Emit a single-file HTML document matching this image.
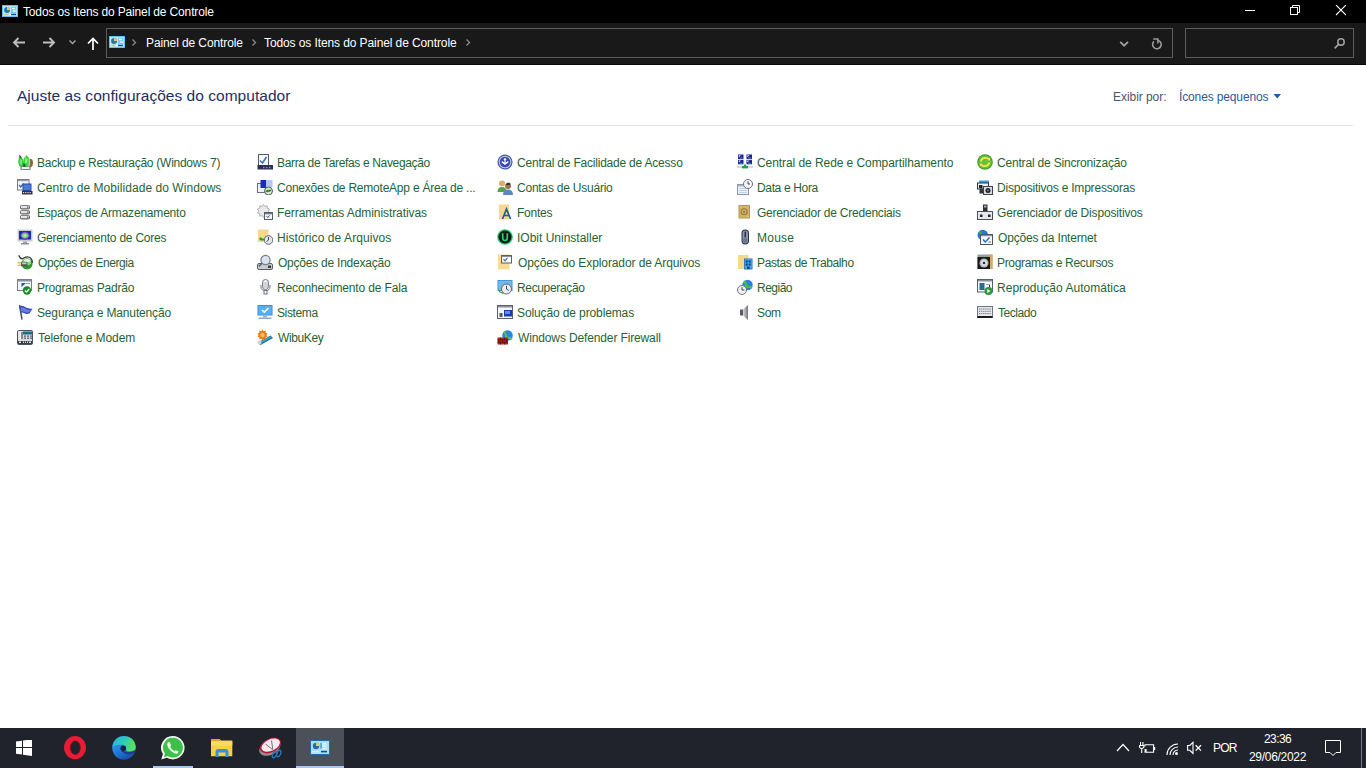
<!DOCTYPE html>
<html><head><meta charset="utf-8"><style>
*{margin:0;padding:0;box-sizing:border-box}
html,body{width:1366px;height:768px;overflow:hidden;background:#fff;font-family:"Liberation Sans",sans-serif}
.a{position:absolute}
.ic{position:absolute;display:block}
.it{position:absolute;font-size:12px;line-height:16px;height:16px;color:#1f6434;white-space:nowrap;top:0}
#title{position:absolute;left:0;top:0;width:1366px;height:23px;background:#000}
#tb{position:absolute;left:0;top:23px;width:1366px;height:41px;background:#191919}
#tbl{position:absolute;left:0;top:64px;width:1366px;height:1px;background:#050505}
#addr{position:absolute;left:106px;top:28px;width:1067px;height:30px;border:1px solid #5c5c5c;background:#191919}
#search{position:absolute;left:1185px;top:28px;width:169px;height:30px;border:1px solid #5c5c5c;background:#191919}
#task{position:absolute;left:0;top:728px;width:1366px;height:40px;background:#20232c}
.wt{position:absolute;color:#fff;font-size:12px;line-height:16px;white-space:nowrap}
</style></head><body>
<div id="title"></div>
<svg class="ic" style="left:2px;top:5px" width="16" height="12" viewBox="0 0 16 12"><rect x="0" y="0" width="16" height="12" fill="#58b4ec"/><rect x="0.8" y="0.8" width="14.4" height="10.4" fill="#b4eafc"/><circle cx="5" cy="5" r="2.9" fill="#2a70c0"/><path d="M5 5 L5 2.1 A2.9 2.9 0 0 1 7.9 5Z" fill="#e8c860"/><path d="M5 5 L7.9 5 A2.9 2.9 0 0 1 6.5 7.5Z" fill="#3a8a40"/><rect x="9" y="1.8" width="5.2" height="6.5" fill="#78c8f4"/><rect x="9.8" y="2.8" width="3" height="1.3" fill="#f4fcff"/><rect x="10.8" y="5.3" width="3" height="1.3" fill="#f4fcff"/><rect x="2.5" y="8.8" width="4" height="1.4" fill="#d8c070"/><rect x="7.2" y="8.8" width="1.4" height="1.4" fill="#ffffff"/><rect x="9" y="8.8" width="5" height="1.4" fill="#1a4a9a"/></svg>
<div class="wt" id="ttl" style="left:23px;top:4px;letter-spacing:-0.15px">Todos os Itens do Painel de Controle</div>
<svg class="a" style="left:1245px;top:5px" width="101" height="11" viewBox="1245 5 101 11">
 <rect x="1245" y="10" width="10" height="1" fill="#fff"/>
 <rect x="1290.5" y="7.5" width="7" height="7" fill="none" stroke="#fff"/>
 <path d="M1292.5 7.5 L1292.5 5.5 L1299.5 5.5 L1299.5 12.5 L1297.5 12.5" fill="none" stroke="#fff"/>
 <path d="M1336 5 L1346 15 M1346 5 L1336 15" stroke="#fff" stroke-width="1.1"/>
</svg>
<div id="tb"></div><div id="tbl"></div>
<svg class="a" style="left:0;top:23px" width="106" height="41" viewBox="0 23 106 41">
 <path d="M25 42.5 L14 42.5 M18.5 38 L14 42.5 L18.5 47" stroke="#bdbdbd" stroke-width="1.9" fill="none"/>
 <path d="M43 42.5 L54 42.5 M49.5 38 L54 42.5 L49.5 47" stroke="#bdbdbd" stroke-width="1.9" fill="none"/>
 <path d="M69.5 40.5 L72.5 43.5 L75.5 40.5" stroke="#a0a0a0" stroke-width="1.5" fill="none"/>
 <path d="M93 50 L93 39 M88 43.5 L93 38.5 L98 43.5" stroke="#fff" stroke-width="1.7" fill="none"/>
</svg>
<div id="addr"></div>
<svg class="ic" style="left:109px;top:36px" width="16" height="12" viewBox="0 0 16 12"><rect x="0" y="0" width="16" height="12" fill="#58b4ec"/><rect x="0.8" y="0.8" width="14.4" height="10.4" fill="#b4eafc"/><circle cx="5" cy="5" r="2.9" fill="#2a70c0"/><path d="M5 5 L5 2.1 A2.9 2.9 0 0 1 7.9 5Z" fill="#e8c860"/><path d="M5 5 L7.9 5 A2.9 2.9 0 0 1 6.5 7.5Z" fill="#3a8a40"/><rect x="9" y="1.8" width="5.2" height="6.5" fill="#78c8f4"/><rect x="9.8" y="2.8" width="3" height="1.3" fill="#f4fcff"/><rect x="10.8" y="5.3" width="3" height="1.3" fill="#f4fcff"/><rect x="2.5" y="8.8" width="4" height="1.4" fill="#d8c070"/><rect x="7.2" y="8.8" width="1.4" height="1.4" fill="#ffffff"/><rect x="9" y="8.8" width="5" height="1.4" fill="#1a4a9a"/></svg>
<svg class="a" style="left:106px;top:28px" width="1067" height="30" viewBox="106 28 1067 30">
 <path d="M132.5 39.5 L135.5 42.5 L132.5 45.5" stroke="#8a8a8a" stroke-width="1.3" fill="none"/>
 <path d="M252.5 39.5 L255.5 42.5 L252.5 45.5" stroke="#8a8a8a" stroke-width="1.3" fill="none"/>
 <path d="M466.5 39.5 L469.5 42.5 L466.5 45.5" stroke="#8a8a8a" stroke-width="1.3" fill="none"/>
 <path d="M1120.2 41.8 L1124.1 45.7 L1128 41.8" stroke="#a0a0a0" stroke-width="1.8" fill="none"/>
 <path d="M1157.3 40.2 A4.3 4.3 0 1 1 1153.9 41.4" stroke="#9a9a9a" stroke-width="1.6" fill="none"/>
 <path d="M1153.2 38.9 L1157.9 38.9 L1157.9 43.4" stroke="#9a9a9a" stroke-width="1.5" fill="none"/>
</svg>
<div class="wt" style="left:146px;top:35px;letter-spacing:-0.1px">Painel de Controle</div>
<div class="wt" style="left:264px;top:35px;letter-spacing:-0.1px">Todos os Itens do Painel de Controle</div>
<div id="search"></div>
<svg class="a" style="left:1330px;top:34px" width="16" height="16" viewBox="0 0 16 16">
 <circle cx="11" cy="8" r="3.2" stroke="#a0a0a0" stroke-width="1.5" fill="none"/>
 <path d="M8.8 10.2 L4.6 14.4" stroke="#a0a0a0" stroke-width="1.7"/>
</svg>
<div class="a" style="left:17px;top:86px;font-size:15.5px;line-height:20px;color:#1c2f66;white-space:nowrap;letter-spacing:0.03px">Ajuste as configurações do computador</div>
<div class="a" style="left:1113px;top:89px;font-size:12px;line-height:16px;color:#4c5666;white-space:nowrap;letter-spacing:-0.05px">Exibir por:</div>
<div class="a" style="left:1179px;top:89px;font-size:12px;line-height:16px;color:#2a5a9e;white-space:nowrap;letter-spacing:-0.136px">Ícones pequenos</div>
<svg class="a" style="left:1273px;top:94px" width="9" height="5" viewBox="0 0 9 5"><path d="M0.5 0 L8 0 L4.25 4.5Z" fill="#1e5aa8"/></svg>
<div class="a" style="left:8px;top:125px;width:1345px;height:1px;background:#dfe2e8"></div>
<svg class="ic" style="left:17px;top:154px" width="16" height="16" viewBox="0 0 16 16"><ellipse cx="13" cy="9" rx="3" ry="4.2" fill="#8a6a4a"/><rect x="10.5" y="5" width="2.5" height="8" fill="#c8c0e0"/><rect x="3.5" y="12" width="10" height="3.8" fill="#5a6a62"/><rect x="4.5" y="12.6" width="8" height="2.4" fill="#eef0ec"/><path d="M2.2 0.8 L5 3.5 L6.5 7 L6 12.5 L2.5 12.5 L1.2 8 L1.8 4Z" fill="#38c038"/><path d="M3 5 L5 6 L5 11 L2.8 10Z" fill="#70f070"/><path d="M2.2 0.8 L4.5 2.8 L3.5 4.5Z" fill="#305a40"/><path d="M9.5 1 L12 4 L11.5 12 L6.5 12.8 L6.5 5Z" fill="#40d040"/><path d="M8.5 3.5 L10.5 5 L10.2 9 L8 9Z" fill="#80ff80"/><path d="M6.5 8 L9 12.8 L6 12.8Z" fill="#1a5a2a"/></svg><div class="it" style="left:37.0px;top:155px;letter-spacing:-0.258px">Backup e Restauração (Windows 7)</div><svg class="ic" style="left:17px;top:179px" width="16" height="16" viewBox="0 0 16 16"><rect x="0.5" y="0.5" width="11.5" height="10.5" fill="#f4f8fc" stroke="#7a7a8a"/><rect x="1" y="1" width="10.5" height="1.2" fill="#9aa0b0"/><path d="M2 6 L3.8 8 L6.5 4.5" stroke="#2a6ab0" stroke-width="1.3" fill="none"/><rect x="5.5" y="4.5" width="9" height="7.5" fill="#2a4aa8"/><rect x="6.5" y="5.5" width="7" height="5.5" fill="#4a7ad8"/><rect x="5" y="12" width="10.5" height="3.5" fill="#303040"/><rect x="6" y="13" width="1.2" height="1.2" fill="#ddd"/><rect x="8.2" y="13" width="1.2" height="1.2" fill="#ddd"/><rect x="10.4" y="13" width="1.2" height="1.2" fill="#ddd"/><rect x="12.6" y="13" width="1.2" height="1.2" fill="#ddd"/></svg><div class="it" style="left:37.0px;top:180px;letter-spacing:0.053px">Centro de Mobilidade do Windows</div><svg class="ic" style="left:17px;top:204px" width="16" height="16" viewBox="0 0 16 16"><rect x="3" y="1" width="10" height="4.5" rx="1.8" fill="#6a6a6a"/><rect x="4" y="1.8" width="8" height="2.4" fill="#e6e6e6"/><rect x="10" y="2.6" width="1.6" height="1" fill="#404040"/><rect x="3" y="6" width="10" height="4.5" rx="1.8" fill="#6a6a6a"/><rect x="4" y="6.8" width="8" height="2.4" fill="#e6e6e6"/><rect x="10" y="7.6" width="1.6" height="1" fill="#404040"/><rect x="3" y="11" width="10" height="4.5" rx="1.8" fill="#6a6a6a"/><rect x="4" y="11.8" width="8" height="2.4" fill="#e6e6e6"/><rect x="10" y="12.6" width="1.6" height="1" fill="#404040"/></svg><div class="it" style="left:37.0px;top:205px;letter-spacing:-0.196px">Espaços de Armazenamento</div><svg class="ic" style="left:17px;top:229px" width="16" height="16" viewBox="0 0 16 16"><defs><radialGradient id="cg"><stop offset="0" stop-color="#e8f060"/><stop offset="0.5" stop-color="#60d8a0"/><stop offset="0.8" stop-color="#8a40c0"/><stop offset="1" stop-color="#1a2ab0"/></radialGradient></defs><rect x="0.5" y="0.5" width="15" height="12" fill="#c8ccd4"/><rect x="2" y="2" width="12" height="8.5" fill="#1a2aa8"/><ellipse cx="8" cy="6.5" rx="5" ry="4" fill="url(#cg)"/><rect x="6" y="12.5" width="4" height="1.5" fill="#a0a4aa"/><rect x="4" y="14" width="8" height="1.5" fill="#8a8e96"/></svg><div class="it" style="left:37.0px;top:230px;letter-spacing:-0.214px">Gerenciamento de Cores</div><svg class="ic" style="left:17px;top:254px" width="16" height="16" viewBox="0 0 16 16"><circle cx="10" cy="9.8" r="5.6" fill="#2a9a2a"/><ellipse cx="10" cy="8" rx="4.2" ry="3.2" fill="#8ae080"/><ellipse cx="10" cy="6.5" rx="3" ry="1.6" fill="#e8f8e8"/><path d="M1.8 1.2 Q3 5 5.5 4.8 Q9 2 12.5 3.2 Q15.8 5 15.2 9" stroke="#3a3a3a" stroke-width="1.2" fill="none"/><rect x="4" y="7.8" width="6.5" height="4.6" rx="1" fill="#5a5a5a"/><rect x="5" y="8.4" width="4.5" height="1.8" fill="#c8c8c8"/><rect x="0.5" y="8.2" width="3.5" height="1.2" fill="#d0b040"/><rect x="0.5" y="10.6" width="3.5" height="1.2" fill="#d0b040"/></svg><div class="it" style="left:38.0px;top:255px;letter-spacing:-0.406px">Opções de Energia</div><svg class="ic" style="left:17px;top:279px" width="16" height="16" viewBox="0 0 16 16"><rect x="0.5" y="0.5" width="14" height="11" fill="#f2f6fa" stroke="#7a7a88"/><rect x="1" y="1" width="13" height="1.5" fill="#8a90a0"/><path d="M4.5 4 L9 4 L4.5 8Z" fill="#2a50b0"/><rect x="9" y="4" width="4" height="1" fill="#8aa0c0"/><circle cx="10" cy="11.5" r="4.2" fill="#1a8a2a"/><path d="M7.8 11.5 L9.5 13 L12.3 10" stroke="#e8ffe8" stroke-width="1.3" fill="none"/></svg><div class="it" style="left:37.0px;top:280px;letter-spacing:-0.227px">Programas Padrão</div><svg class="ic" style="left:17px;top:304px" width="16" height="16" viewBox="0 0 16 16"><path d="M2.5 1 L5 15.5" stroke="#4a5068" stroke-width="1.5"/><path d="M2.5 2 Q6 1 9 3.5 Q12 5 15.5 4.5 L12.5 9.5 Q9 10.5 7 9 Q5 8 3.5 9Z" fill="#3a50b8"/><path d="M4 3.5 Q7 3 9 5 Q11 6.5 13.5 6 L12 8.3 Q9 9 7.5 7.8 Q5.5 7 4 7.5Z" fill="#6a80e0"/></svg><div class="it" style="left:37.0px;top:305px;letter-spacing:-0.157px">Segurança e Manutenção</div><svg class="ic" style="left:17px;top:329px" width="16" height="16" viewBox="0 0 16 16"><rect x="0.5" y="1.5" width="15" height="14" rx="1.2" fill="#d8dce4" stroke="#4a5060"/><rect x="1.5" y="2.5" width="3" height="8" fill="#f0f0e8"/><rect x="4.5" y="3" width="1" height="7" fill="#303030"/><rect x="6" y="2.5" width="9" height="3" fill="#1a6a8a"/><rect x="7" y="6.5" width="2" height="1.2" fill="#505860"/><rect x="10" y="6.5" width="2" height="1.2" fill="#505860"/><rect x="13" y="6.5" width="2" height="1.2" fill="#805060"/><rect x="7" y="8.6" width="2" height="1.2" fill="#505860"/><rect x="10" y="8.6" width="2" height="1.2" fill="#505860"/><rect x="13" y="8.6" width="2" height="1.2" fill="#505860"/><rect x="1" y="12" width="14" height="3" fill="#3a3e48"/><rect x="2" y="12.5" width="2" height="1.5" fill="#e0e0e0"/><rect x="6" y="12.5" width="1" height="1.5" fill="#e0e0e0"/><rect x="8" y="12.5" width="1" height="1.5" fill="#e0e0e0"/><rect x="10" y="12.5" width="1" height="1.5" fill="#e0e0e0"/><rect x="12" y="12.5" width="2" height="1.5" fill="#e0e0e0"/></svg><div class="it" style="left:38.0px;top:330px;letter-spacing:-0.100px">Telefone e Modem</div><svg class="ic" style="left:257px;top:154px" width="16" height="16" viewBox="0 0 16 16"><rect x="1.5" y="0.5" width="10" height="12" fill="#f6f8fc" stroke="#5a5a66"/><path d="M3 6.5 L5.5 9 L9.5 3" stroke="#3a78b8" stroke-width="1.6" fill="none"/><rect x="0.5" y="11" width="15.5" height="4.5" fill="#2a2e50"/><rect x="6" y="12.8" width="1.5" height="1.5" fill="#8a90c0"/><rect x="9" y="12.8" width="1.5" height="1.5" fill="#8a90c0"/><rect x="12" y="12.8" width="1.5" height="1.5" fill="#8a90c0"/></svg><div class="it" style="left:277.0px;top:155px;letter-spacing:-0.344px">Barra de Tarefas e Navegação</div><svg class="ic" style="left:257px;top:179px" width="16" height="16" viewBox="0 0 16 16"><rect x="0.5" y="4.5" width="9" height="9" fill="#eef2f8" stroke="#6a7080"/><rect x="8" y="1" width="7.5" height="7" fill="#b8c8e8"/><rect x="3.5" y="1" width="5.5" height="8" fill="#1a2ab8"/><circle cx="11.5" cy="12" r="4" fill="#d8ecc8" stroke="#505a68"/><path d="M8.8 12.5 L10.8 11 M14.2 11 L12 12.5 M10 13 L13 11" stroke="#2a7a2a" stroke-width="1.1" fill="none"/></svg><div class="it" style="left:277.0px;top:180px;letter-spacing:-0.221px">Conexões de RemoteApp e Área de ...</div><svg class="ic" style="left:257px;top:204px" width="16" height="16" viewBox="0 0 16 16"><path d="M6.5 0.5 L7.8 2.5 L10.2 1.7 L10.3 4.2 L12.6 5 L11.2 7 L12.6 9 L10.3 9.8 L10.2 12.3 L7.8 11.5 L6.5 13.5 L5.2 11.5 L2.8 12.3 L2.7 9.8 L0.4 9 L1.8 7 L0.4 5 L2.7 4.2 L2.8 1.7 L5.2 2.5Z" fill="#e8eaee" stroke="#a0a4ac" stroke-width="0.8"/><rect x="7.5" y="8.5" width="8" height="7" fill="#f2f4f6" stroke="#5a6068"/><rect x="8" y="9" width="7" height="1.3" fill="#707880"/><path d="M9.5 12 L10.8 13.5 L12.5 11.3" stroke="#4a5a80" fill="none"/></svg><div class="it" style="left:277.0px;top:205px;letter-spacing:-0.077px">Ferramentas Administrativas</div><svg class="ic" style="left:257px;top:229px" width="16" height="16" viewBox="0 0 16 16"><rect x="1" y="0.5" width="10.5" height="12.5" fill="#f8d890"/><path d="M2 10 Q5 14 10 9 L11 11 L11 7 L7.5 7.5 L9 8.5 Q6 11 3.5 8Z" fill="#2aa02a"/><circle cx="11.5" cy="11" r="4.3" fill="#e4e6ec" stroke="#606670"/><path d="M11.5 8 L11.5 11 L9.5 12.5" stroke="#404048" fill="none"/></svg><div class="it" style="left:277.0px;top:230px;letter-spacing:0.080px">Histórico de Arquivos</div><svg class="ic" style="left:257px;top:254px" width="16" height="16" viewBox="0 0 16 16"><rect x="0.5" y="9.5" width="15" height="6" rx="1.5" fill="#c8ccd0" stroke="#5a5e66"/><rect x="11" y="11.5" width="3" height="2.5" fill="#3a3a3a"/><circle cx="8.5" cy="6" r="4.6" fill="#d8e2f0" stroke="#7a8088" stroke-width="1.2"/><path d="M5 9 L2 12.5" stroke="#5a5e66" stroke-width="1.5"/></svg><div class="it" style="left:278.0px;top:255px;letter-spacing:-0.233px">Opções de Indexação</div><svg class="ic" style="left:257px;top:279px" width="16" height="16" viewBox="0 0 16 16"><rect x="5.5" y="0.5" width="6" height="10" rx="3" fill="#f4f4f6" stroke="#707480"/><path d="M5.5 4 L11.5 4 M5.5 6 L11.5 6 M5.5 8 L11.5 8" stroke="#a0a4ac" stroke-width="0.8"/><path d="M4 6 L4 8 Q4 11.5 8.5 11.5 Q13 11.5 13 8 L13 6" stroke="#707480" fill="none"/><rect x="7" y="11.5" width="3" height="3.5" fill="#f4f4f6" stroke="#707480"/></svg><div class="it" style="left:277.0px;top:280px;letter-spacing:-0.143px">Reconhecimento de Fala</div><svg class="ic" style="left:257px;top:304px" width="16" height="16" viewBox="0 0 16 16"><rect x="0.5" y="1" width="15" height="10.5" fill="#2a8ad8"/><rect x="1.3" y="1.8" width="13.4" height="8.9" fill="#58b0f0"/><path d="M5 6 L7.3 8.2 L11.5 4" stroke="#ffffff" stroke-width="1.5" fill="none"/><rect x="6" y="12.3" width="4" height="1" fill="#7090b0"/><rect x="1.5" y="13.5" width="13" height="1.5" fill="#90a8c0"/></svg><div class="it" style="left:277.0px;top:305px;letter-spacing:-0.383px">Sistema</div><svg class="ic" style="left:257px;top:329px" width="16" height="16" viewBox="0 0 16 16"><path d="M1 13.5 L13.5 6.5 L16 9 L3.5 16Z" fill="#1a6a8a"/><path d="M2 13.5 L13.5 7.3 L14.5 8.5 L3 14.7Z" fill="#40b0c8"/><path d="M0.5 12.5 L4 11 L4.5 15 L1.5 15.5Z" fill="#c8d0d8"/><path d="M5.5 0.5 L6.6 2.2 L8.6 1.6 L8.6 3.7 L10.5 4.5 L9.3 6 L10.5 7.5 L8.6 8.3 L8.6 10.4 L6.6 9.8 L5.5 11.5 L4.4 9.8 L2.4 10.4 L2.4 8.3 L0.5 7.5 L1.7 6 L0.5 4.5 L2.4 3.7 L2.4 1.6 L4.4 2.2Z" fill="#e87a18"/><circle cx="5.5" cy="6" r="2.2" fill="#f8c050"/></svg><div class="it" style="left:278.0px;top:330px;letter-spacing:-0.383px">WibuKey</div><svg class="ic" style="left:497px;top:154px" width="16" height="16" viewBox="0 0 16 16"><circle cx="8" cy="8" r="7.6" fill="#4858b0"/><circle cx="8" cy="8" r="6.3" fill="#c8d0ec"/><circle cx="8" cy="8" r="5.3" fill="#3848b0"/><path d="M4.8 7.5 Q8 11.5 11.2 7.5" stroke="#fff" stroke-width="1.3" fill="none"/><circle cx="8" cy="5.5" r="1.3" fill="#fff"/><path d="M8 7 L8 11" stroke="#fff" stroke-width="1.2"/></svg><div class="it" style="left:517.0px;top:155px;letter-spacing:-0.210px">Central de Facilidade de Acesso</div><svg class="ic" style="left:497px;top:179px" width="16" height="16" viewBox="0 0 16 16"><circle cx="5" cy="4.5" r="3" fill="#d8b070"/><path d="M0.5 13 Q0.5 8 5 8 Q9.5 8 9.5 13Z" fill="#58a050"/><circle cx="11" cy="7" r="3" fill="#a07050"/><path d="M10 4 Q11 3 13.5 4.5 L13 6 L9 6Z" fill="#3a3030"/><path d="M6 16 Q6 10.5 11 10.5 Q16 10.5 16 16Z" fill="#5a88c0"/></svg><div class="it" style="left:517.0px;top:180px;letter-spacing:-0.225px">Contas de Usuário</div><svg class="ic" style="left:497px;top:204px" width="16" height="16" viewBox="0 0 16 16"><rect x="2" y="0.5" width="10" height="15" fill="#f8d888"/><path d="M5.5 15 L9.5 5 L13.5 15 M7.3 11.5 L11.7 11.5" stroke="#1a5aa0" stroke-width="1.7" fill="none"/></svg><div class="it" style="left:517.0px;top:205px;letter-spacing:-0.260px">Fontes</div><svg class="ic" style="left:497px;top:229px" width="16" height="16" viewBox="0 0 16 16"><circle cx="8" cy="8" r="7.8" fill="#2ac870"/><circle cx="8" cy="8" r="6.5" fill="#0a1a14"/><path d="M5.7 4.2 L5.7 8.8 Q5.7 11.5 8 11.5 Q10.3 11.5 10.3 8.8 L10.3 4.2" stroke="#30d070" stroke-width="1.7" fill="none"/></svg><div class="it" style="left:517.0px;top:230px;letter-spacing:0.000px">IObit Uninstaller</div><svg class="ic" style="left:497px;top:254px" width="16" height="16" viewBox="0 0 16 16"><rect x="1" y="0.5" width="11.5" height="15" fill="#f8dc90"/><rect x="4.5" y="1.5" width="10" height="7.5" fill="#f6f8fa" stroke="#5a6068"/><rect x="5" y="2" width="9" height="1" fill="#8a909a"/><path d="M6.5 5 L8 6.8 L10.5 3.8" stroke="#3a6ab0" stroke-width="1.1" fill="none"/></svg><div class="it" style="left:518.0px;top:255px;letter-spacing:-0.100px">Opções do Explorador de Arquivos</div><svg class="ic" style="left:497px;top:279px" width="16" height="16" viewBox="0 0 16 16"><rect x="0.5" y="1" width="15" height="11" fill="#3a90d8"/><rect x="1.3" y="1.8" width="13.4" height="9.4" fill="#70b8e8"/><circle cx="9.5" cy="10" r="5" fill="#eaeef2" stroke="#606670"/><path d="M9.5 6.8 L9.5 10 L11.8 11.5" stroke="#404048" fill="none"/><path d="M1.5 9 Q3 14 7 13.5 L6 15 L2 13Z" fill="#2aa02a"/></svg><div class="it" style="left:517.0px;top:280px;letter-spacing:-0.350px">Recuperação</div><svg class="ic" style="left:497px;top:304px" width="16" height="16" viewBox="0 0 16 16"><rect x="0.5" y="1.5" width="15" height="13" fill="#f4f6f8" stroke="#5a6068"/><rect x="1" y="2" width="14" height="1.5" fill="#8a909a"/><rect x="7" y="6" width="8" height="6.5" fill="#1a3ab0"/><rect x="8" y="7" width="5" height="3" fill="#5a90e8"/><rect x="2.5" y="9" width="3" height="4" fill="#505860"/></svg><div class="it" style="left:517.0px;top:305px;letter-spacing:-0.118px">Solução de problemas</div><svg class="ic" style="left:497px;top:329px" width="16" height="16" viewBox="0 0 16 16"><circle cx="10.5" cy="6.5" r="5.3" fill="#2a88d8"/><path d="M7 3 Q10 5.5 8.5 9 Q12 8 15 10" stroke="#5ac050" stroke-width="2" fill="none"/><rect x="0.5" y="8.5" width="10.5" height="7" fill="#a82818"/><path d="M0.5 10.8 L11 10.8 M0.5 13.2 L11 13.2 M3.5 8.5 L3.5 10.8 M7.5 8.5 L7.5 10.8 M2 10.8 L2 13.2 M5.5 10.8 L5.5 13.2 M9.5 10.8 L9.5 13.2 M3.5 13.2 L3.5 15.5 M7.5 13.2 L7.5 15.5" stroke="#5a1008" stroke-width="0.8"/></svg><div class="it" style="left:518.0px;top:330px;letter-spacing:-0.133px">Windows Defender Firewall</div><svg class="ic" style="left:737px;top:154px" width="16" height="16" viewBox="0 0 16 16"><rect x="1" y="0.5" width="5.5" height="4.5" fill="#1a2a8a"/><rect x="9.5" y="0.5" width="5.5" height="4.5" fill="#1a2a8a"/><rect x="1" y="5.8" width="5.5" height="4.5" fill="#1a2a8a"/><rect x="9.5" y="5.8" width="5.5" height="4.5" fill="#1a2a8a"/><path d="M1.8 1.3 L4 1.3 L1.8 3.3Z M10.3 1.3 L12.5 1.3 L10.3 3.3Z M1.8 6.6 L4 6.6 L1.8 8.6Z M10.3 6.6 L12.5 6.6 L10.3 8.6Z" fill="#e8f0ff"/><rect x="2.5" y="3.5" width="3" height="1" fill="#5a80d0"/><rect x="11" y="3.5" width="3" height="1" fill="#5a80d0"/><rect x="2.5" y="8.8" width="3" height="1" fill="#5a80d0"/><rect x="11" y="8.8" width="3" height="1" fill="#5a80d0"/><path d="M0 13 L16 13" stroke="#a8b0c0"/><rect x="5" y="11.8" width="6" height="2.6" fill="#20a050"/><rect x="7" y="10.5" width="2" height="1.5" fill="#20a050"/></svg><div class="it" style="left:757.0px;top:155px;letter-spacing:-0.070px">Central de Rede e Compartilhamento</div><svg class="ic" style="left:737px;top:179px" width="16" height="16" viewBox="0 0 16 16"><rect x="0.5" y="5.5" width="11" height="10" fill="#eef2f8" stroke="#8a98aa"/><rect x="1" y="6" width="10" height="1.5" fill="#a8b8cc"/><path d="M2.5 9.5 L10 9.5 M2.5 11.5 L10 11.5 M2.5 13.5 L10 13.5" stroke="#8aa8d8" stroke-width="0.9" stroke-dasharray="1 1"/><circle cx="11" cy="5" r="4.5" fill="#f4f6f8" stroke="#6a7280"/><path d="M11 2.3 L11 5 L13 5" stroke="#404048" fill="none"/></svg><div class="it" style="left:757.0px;top:180px;letter-spacing:-0.350px">Data e Hora</div><svg class="ic" style="left:737px;top:204px" width="16" height="16" viewBox="0 0 16 16"><rect x="1.5" y="1" width="11.5" height="13.5" fill="#b89848"/><rect x="2.5" y="2" width="9.5" height="11.5" fill="#d0b468"/><circle cx="7.2" cy="7.8" r="3" fill="none" stroke="#98783a" stroke-width="1.1"/><circle cx="7.2" cy="7.8" r="1.1" fill="#a06a40"/><circle cx="3.5" cy="3" r="0.6" fill="#f0e0a0"/><circle cx="11" cy="12.5" r="0.6" fill="#f0e0a0"/></svg><div class="it" style="left:757.0px;top:205px;letter-spacing:-0.216px">Gerenciador de Credenciais</div><svg class="ic" style="left:737px;top:229px" width="16" height="16" viewBox="0 0 16 16"><rect x="4.5" y="0.5" width="7.5" height="15" rx="3.7" fill="#2a3040"/><rect x="5.5" y="1.5" width="5.5" height="13" rx="2.7" fill="#8a98b0"/><rect x="6" y="9" width="4.5" height="5" rx="2" fill="#6a7890"/><rect x="7.6" y="2.5" width="1.3" height="6" rx="0.6" fill="#1a2030"/></svg><div class="it" style="left:757.0px;top:230px;letter-spacing:0.250px">Mouse</div><svg class="ic" style="left:737px;top:254px" width="16" height="16" viewBox="0 0 16 16"><rect x="1" y="1" width="10.5" height="14" fill="#f8d888"/><rect x="7" y="4.5" width="8.5" height="11" fill="#1a70c0"/><rect x="7.7" y="5.2" width="7.1" height="9.6" fill="#48a8e8"/><rect x="8.7" y="6.5" width="2" height="2" fill="#0a3a80"/><rect x="11.7" y="6.5" width="2" height="2" fill="#0a3a80"/><rect x="8.7" y="9.5" width="2" height="2" fill="#0a3a80"/><rect x="11.7" y="9.5" width="2" height="2" fill="#0a3a80"/><rect x="10" y="12.5" width="2.5" height="2.5" fill="#0a3a80"/></svg><div class="it" style="left:757.0px;top:255px;letter-spacing:-0.371px">Pastas de Trabalho</div><svg class="ic" style="left:737px;top:279px" width="16" height="16" viewBox="0 0 16 16"><circle cx="10.5" cy="6" r="5.2" fill="#2a80d8"/><path d="M7 2.5 Q10 4.5 9 8 Q12 7 15 9" stroke="#48c048" stroke-width="2.2" fill="none"/><circle cx="5" cy="11" r="4.5" fill="#eef0f2" stroke="#707680"/><path d="M5 8.2 L5 11 L7.3 11" stroke="#404048" fill="none"/></svg><div class="it" style="left:757.0px;top:280px;letter-spacing:-0.500px">Região</div><svg class="ic" style="left:737px;top:304px" width="16" height="16" viewBox="0 0 16 16"><defs><linearGradient id="sg" x1="0" x2="1"><stop offset="0" stop-color="#d8dade"/><stop offset="1" stop-color="#707478"/></linearGradient></defs><rect x="3" y="5.5" width="3.5" height="6" fill="#5a5e64"/><path d="M6 5.5 L11 1 L11 16 L6 11.5Z" fill="url(#sg)"/></svg><div class="it" style="left:757.0px;top:305px;letter-spacing:-0.350px">Som</div><svg class="ic" style="left:977px;top:154px" width="16" height="16" viewBox="0 0 16 16"><circle cx="8" cy="8" r="7.8" fill="#3a9a28"/><circle cx="8" cy="8" r="6.8" fill="#68c038"/><path d="M3.8 7.5 Q4.5 3.8 8.5 3.8 Q10.8 3.8 12 5.5 M12.2 8.5 Q11.5 12.2 7.5 12.2 Q5.2 12.2 4 10.5" stroke="#f0e850" stroke-width="1.7" fill="none"/><path d="M10.5 6.2 L13.2 6.5 L12.8 3.5Z M5.5 9.8 L2.8 9.5 L3.2 12.5Z" fill="#f0e850"/></svg><div class="it" style="left:997.0px;top:155px;letter-spacing:-0.183px">Central de Sincronização</div><svg class="ic" style="left:977px;top:179px" width="16" height="16" viewBox="0 0 16 16"><rect x="2" y="1.5" width="10" height="3" fill="#38a0e0"/><rect x="0.5" y="4" width="11" height="6" fill="#f0f0f0" stroke="#303438"/><rect x="2" y="6" width="3.5" height="3" fill="#202428"/><rect x="2.5" y="9.5" width="3.5" height="5" fill="#30343a"/><rect x="6.5" y="7.5" width="9" height="8" fill="#d8dade" stroke="#404448"/><circle cx="11" cy="11.5" r="2.5" fill="#20242a"/><circle cx="11" cy="11.5" r="1.1" fill="#6a7078"/></svg><div class="it" style="left:997.0px;top:180px;letter-spacing:-0.208px">Dispositivos e Impressoras</div><svg class="ic" style="left:977px;top:204px" width="16" height="16" viewBox="0 0 16 16"><rect x="6" y="0.5" width="4.5" height="7" fill="#2a2e34"/><rect x="7" y="1.5" width="2.5" height="2" fill="#a8acb0"/><rect x="0.5" y="7.5" width="15" height="8" fill="#e6e8ea" stroke="#4a4e54"/><rect x="3" y="10.5" width="2.5" height="2.5" fill="#202428"/><rect x="11" y="10.5" width="2.5" height="2.5" fill="#202428"/></svg><div class="it" style="left:997.0px;top:205px;letter-spacing:-0.165px">Gerenciador de Dispositivos</div><svg class="ic" style="left:977px;top:229px" width="16" height="16" viewBox="0 0 16 16"><circle cx="5.8" cy="6" r="5.3" fill="#2a78d0"/><path d="M2.3 2.5 Q5 4.5 4 8 Q7 6.5 10 7.5" stroke="#48b050" stroke-width="1.8" fill="none"/><rect x="3.5" y="5.5" width="12" height="10" fill="#f4f6fa" stroke="#505660"/><rect x="4" y="6" width="11" height="1.2" fill="#8a909a"/><path d="M6 10.5 L8.3 13 L12.5 8.5" stroke="#2a70b8" stroke-width="1.5" fill="none"/><rect x="11.5" y="12.5" width="2.5" height="1" fill="#707880"/></svg><div class="it" style="left:998.0px;top:230px;letter-spacing:-0.188px">Opções da Internet</div><svg class="ic" style="left:977px;top:254px" width="16" height="16" viewBox="0 0 16 16"><rect x="0.5" y="0.5" width="15" height="14.5" fill="#9aa0a8"/><rect x="13" y="0.5" width="2.5" height="14.5" fill="#e0a860"/><rect x="0.5" y="3" width="12.5" height="12" fill="#1a1a1a"/><circle cx="7" cy="9" r="4.5" fill="#b8bcc0"/><circle cx="7" cy="9" r="3" fill="#e0e2e4"/><circle cx="7" cy="9" r="1.3" fill="#303030"/></svg><div class="it" style="left:997.0px;top:255px;letter-spacing:-0.332px">Programas e Recursos</div><svg class="ic" style="left:977px;top:279px" width="16" height="16" viewBox="0 0 16 16"><rect x="0.5" y="0.5" width="15" height="12.5" fill="#f4f6f8" stroke="#5a6068"/><rect x="1" y="1" width="14" height="1.5" fill="#8a909a"/><rect x="2.5" y="4" width="5" height="7" fill="#2a6a8a"/><rect x="9" y="5" width="4" height="1" fill="#9aa8b8"/><rect x="12" y="6" width="1" height="4" fill="#303840"/><circle cx="11.5" cy="12" r="4" fill="#2a9a3a"/><path d="M10.3 10 L13.5 12 L10.3 14Z" fill="#fff"/></svg><div class="it" style="left:997.0px;top:280px;letter-spacing:0.035px">Reprodução Automática</div><svg class="ic" style="left:977px;top:304px" width="16" height="16" viewBox="0 0 16 16"><rect x="0.5" y="2.5" width="15" height="11" fill="#e6e8ec" stroke="#707680"/><path d="M2 5 L14 5 M2 7.3 L14 7.3 M2 9.6 L14 9.6" stroke="#5a606a" stroke-width="0.9" stroke-dasharray="1.2 0.9"/><rect x="0.5" y="12" width="15" height="2" fill="#1a1c20"/></svg><div class="it" style="left:998.0px;top:305px;letter-spacing:-0.433px">Teclado</div>
<div id="task"></div>

<svg class="a" style="left:16px;top:740px" width="16" height="16" viewBox="0 0 16 16">
 <path d="M0 1.4 L6 0.65 L6 7 L0 7Z M7 0.5 L16.2 -0.6 L16.2 7 L7 7Z M0 8 L6 8 L6 14.6 L0 13.8Z M7 8 L16.2 8 L16.2 16 L7 14.7Z" fill="#fff"/>
</svg>
<svg class="a" style="left:63px;top:736px" width="24" height="24" viewBox="0 0 24 24">
 <ellipse cx="12" cy="11.6" rx="11" ry="11.5" fill="#ea1b34"/>
 <ellipse cx="12.3" cy="11.7" rx="5" ry="6.8" fill="#20232c"/>
 <ellipse cx="12.3" cy="11.7" rx="5" ry="6.8" fill="none" stroke="#8a0a18" stroke-width="0.8"/>
</svg>
<svg class="a" style="left:112px;top:736px" width="24" height="24" viewBox="0 0 24 24">
 <defs><linearGradient id="eg" x1="0" y1="0" x2="0.7" y2="1"><stop offset="0" stop-color="#3aa8f0"/><stop offset="0.6" stop-color="#1e78d8"/><stop offset="1" stop-color="#1a4aa0"/></linearGradient>
 <linearGradient id="eg2" x1="0" y1="0" x2="1" y2="0.3"><stop offset="0" stop-color="#28b8e0"/><stop offset="0.5" stop-color="#2ac8c0"/><stop offset="1" stop-color="#58e060"/></linearGradient></defs>
 <circle cx="12" cy="11.8" r="11.8" fill="url(#eg)"/>
 <path d="M0.3 10.5 Q2 0.5 12 0.2 Q22.5 0.5 23.8 10.5 Q24 15.5 18.5 15.8 Q14.5 16 13.5 13.5 Q14.5 9.5 10.5 8.8 Q4.5 8.2 0.3 10.5Z" fill="url(#eg2)"/>
 <path d="M10.5 14 Q15 18 23.6 14 L23 16.8 Q15 20.5 9.5 15.5Z" fill="#163a8a" fill-opacity="0.85"/>
 <circle cx="11.3" cy="12.2" r="2.8" fill="#16204a"/>
</svg>
<svg class="a" style="left:160px;top:736px" width="26" height="25" viewBox="0 0 26 25">
 <path d="M13 0 A11.7 11.7 0 1 1 6.8 21.7 L1.2 23.5 L2.9 18 A11.7 11.7 0 0 1 13 0Z" fill="#f0f4f0"/>
 <path d="M13 1.8 A9.9 9.9 0 1 1 7.6 20 L3.9 21.2 L5 17.6 A9.9 9.9 0 0 1 13 1.8Z" fill="#3cc04a"/>
 <g transform="translate(12.7 11.8) scale(1.18) translate(-12.5 -11.8)"><path d="M8.5 7 Q7.5 8 8 10 Q9.5 14 14 16.5 Q16 17.3 17 16.3 L17.5 15 L15 13.8 L14 14.8 Q11.5 13.5 10.3 11 L11.2 10 L10 7.2Z" fill="#eefcea"/></g>
</svg>
<svg class="a" style="left:210px;top:738px" width="24" height="20" viewBox="0 0 24 20">
 <path d="M1 1 L9.5 1 L11 2.5 L22.3 2.5 L22.3 18.2 L1 18.2Z" fill="#f8d048"/>
 <rect x="1" y="1" width="9" height="2" fill="#e0a820"/>
 <rect x="1" y="3.5" width="21.3" height="4" fill="#fcdc60"/>
 <path d="M5.5 19 L5.5 14 Q5.5 11 8.5 11 L15.5 11 Q18.5 11 18.5 14 L18.5 19 L15.5 19 L15.5 14.5 L8.5 14.5 L8.5 19Z" fill="#3a90d8"/>
</svg>
<svg class="a" style="left:257px;top:737px" width="27" height="23" viewBox="0 0 27 23">
 <ellipse cx="12.8" cy="10.8" rx="11.2" ry="7" transform="rotate(-25 12.8 10.8)" fill="#909096"/>
 <ellipse cx="13.5" cy="8.5" rx="11.2" ry="7" transform="rotate(-25 13.5 8.5)" fill="#b8182e"/>
 <ellipse cx="13.7" cy="8.2" rx="9.8" ry="5.7" transform="rotate(-25 13.7 8.2)" fill="#f6eaf0"/>
 <path d="M8.5 7 L15.5 12.5 M14.5 3.5 L15.8 12.5" stroke="#70707a" stroke-width="1"/>
 <ellipse cx="17.5" cy="17.5" rx="1.8" ry="3.4" transform="rotate(25 17.5 17.5)" fill="none" stroke="#2a78c0" stroke-width="1.3"/>
 <ellipse cx="21.8" cy="16.5" rx="1.8" ry="3.4" transform="rotate(25 21.8 16.5)" fill="none" stroke="#2a78c0" stroke-width="1.3"/>
</svg>
<div class="a" style="left:296px;top:728px;width:48px;height:40px;background:#4c5059"></div>
<svg class="a" style="left:310px;top:740px" width="20" height="15" viewBox="0 0 20 15">
 <rect x="0" y="0" width="20" height="15" fill="#2a68a8"/><rect x="1" y="1" width="18" height="13" fill="#a8e2fa"/>
 <circle cx="6" cy="6" r="3.2" fill="#2a68b0"/><path d="M6 6 L6 2.8 A3.2 3.2 0 0 1 9.2 6Z" fill="#d8d070"/>
 <rect x="10.5" y="3" width="1.2" height="5.5" fill="#3a80c0"/>
 <rect x="12.3" y="3.2" width="4" height="1.3" fill="#eafcff"/><rect x="12.3" y="5.6" width="4" height="1.3" fill="#eafcff"/><rect x="12.3" y="8" width="4" height="1.3" fill="#eafcff"/>
 <rect x="2" y="11" width="7" height="1.3" fill="#dcefe4"/><rect x="11" y="10.8" width="6" height="1.6" fill="#1a4a8a"/>
</svg>
<div class="a" style="left:153px;top:766px;width:40px;height:2px;background:#a6c8f2"></div>
<div class="a" style="left:296px;top:766px;width:48px;height:2px;background:#a6c8f2"></div>
<svg class="a" style="left:1110px;top:728px" width="256" height="40" viewBox="1110 728 256 40">
 <path d="M1117 751 L1123 744.5 L1129 751" stroke="#fff" stroke-width="1.2" fill="none"/>
 <path d="M1140.5 742 L1140.5 745 M1142.9 742 L1142.9 745 M1139.6 745.5 L1143.8 745.5 L1143.8 747.3 Q1141.7 749.8 1139.6 747.3Z M1141.7 749 L1141.7 753" stroke="#fff" stroke-width="1.1" fill="none"/>
 <path d="M1144.5 744.8 L1153.6 744.8 L1153.6 752.3 L1144.5 752.3 M1144.9 744.8 L1144.9 746.5" fill="none" stroke="#fff" stroke-width="1.1"/>
 <rect x="1154" y="747" width="1.2" height="3" fill="#fff"/>
 <rect x="1144.6" y="749" width="2" height="3" fill="#fff"/>
 <path d="M1167 755 A11 11 0 0 1 1178 744 M1170 755 A8 8 0 0 1 1178 747 M1173 755 A5 5 0 0 1 1178 750" stroke="#fff" stroke-width="1.1" fill="none"/>
 <circle cx="1176.5" cy="753.5" r="1.5" fill="#fff"/>
 <path d="M1187.6 745.5 L1189.8 745.5 L1193 742.3 L1193 753.5 L1189.8 750.3 L1187.6 750.3Z" stroke="#fff" stroke-width="1.1" fill="none"/>
 <path d="M1195.6 745.2 L1201 750.6 M1201 745.2 L1195.6 750.6" stroke="#fff" stroke-width="1.3"/>
 <path d="M1325.5 740.5 L1340.5 740.5 L1340.5 752.5 L1336 752.5 L1333 755.5 L1330 752.5 L1325.5 752.5Z" stroke="#fff" stroke-width="1" fill="none"/>
 <rect x="1361" y="728" width="1" height="40" fill="#767a82"/>
</svg>
<div class="wt" style="left:1213px;top:740px;letter-spacing:-0.8px">POR</div>
<div class="wt" style="left:1264px;top:731px;letter-spacing:-0.575px">23:36</div>
<div class="wt" style="left:1249px;top:749px;letter-spacing:-0.3px">29/06/2022</div>

</body></html>
